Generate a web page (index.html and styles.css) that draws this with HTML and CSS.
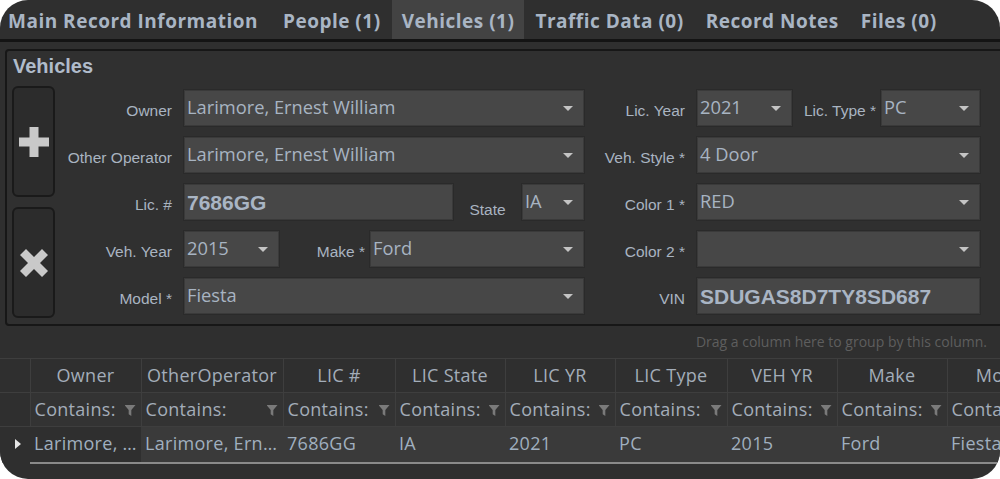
FILE: index.html
```html
<!DOCTYPE html>
<html lang="en">
<head>
    <meta charset="UTF-8">
    <title>Vehicles</title>
    <link rel="stylesheet" href="styles.css">
</head>
<body>
    <div class="window">
        <nav class="tabs">
            <a href="#" class="tab first">Main Record Information</a>
            <a href="#" class="tab">People (1)</a>
            <a href="#" class="tab active">Vehicles (1)</a>
            <a href="#" class="tab">Traffic Data (0)</a>
            <a href="#" class="tab">Record Notes</a>
            <a href="#" class="tab">Files (0)</a>
        </nav>

        <section class="panel">
            <h2 class="panel-title">Vehicles</h2>
            <div class="panel-body">
                <div class="side">
                    <button class="side-btn" title="Add">
                        <svg width="30" height="30" viewBox="0 0 30 30"><path d="M10.5 0h9v10.5H30v9H19.5V30h-9V19.5H0v-9h10.5z" fill="#c9c9c9"/></svg>
                    </button>
                    <button class="side-btn" title="Remove">
                        <svg width="28" height="28" viewBox="0 0 28 28"><path d="M6 0l8 8 8-8 6 6-8 8 8 8-6 6-8-8-8 8-6-6 8-8-8-8z" fill="#c9c9c9"/></svg>
                    </button>
                </div>

                <div class="form">
                    <label class="lbl">Owner</label>
                    <div class="combo">Larimore, Ernest William</div>
                    <label class="lbl">Lic. Year</label>
                    <div class="split">
                        <div class="combo w95">2021</div>
                        <label class="lbl grow">Lic. Type *</label>
                        <div class="combo w99">PC</div>
                    </div>

                    <label class="lbl">Other Operator</label>
                    <div class="combo">Larimore, Ernest William</div>
                    <label class="lbl">Veh. Style *</label>
                    <div class="combo">4 Door</div>

                    <label class="lbl">Lic. #</label>
                    <div class="split">
                        <div class="field bold w269">7686GG</div>
                        <label class="lbl grow center low">State</label>
                        <div class="combo w62">IA</div>
                    </div>
                    <label class="lbl">Color 1 *</label>
                    <div class="combo">RED</div>

                    <label class="lbl">Veh. Year</label>
                    <div class="split">
                        <div class="combo w95">2015</div>
                        <label class="lbl grow">Make *</label>
                        <div class="combo w214">Ford</div>
                    </div>
                    <label class="lbl">Color 2 *</label>
                    <div class="combo"></div>

                    <label class="lbl">Model *</label>
                    <div class="combo">Fiesta</div>
                    <label class="lbl">VIN</label>
                    <div class="field bold">SDUGAS8D7TY8SD687</div>
                </div>
            </div>
        </section>

        <section class="grid">
            <div class="group-bar">Drag a column here to group by this column.</div>
            <table class="data">
                <colgroup>
                    <col style="width:30px">
                    <col style="width:111px">
                    <col style="width:142px">
                    <col style="width:112px">
                    <col style="width:110px">
                    <col style="width:110px">
                    <col style="width:112px">
                    <col style="width:110px">
                    <col style="width:110px">
                    <col style="width:111px">
                </colgroup>
                <thead>
                    <tr class="head">
                        <th class="ind"></th>
                        <th>Owner</th>
                        <th>OtherOperator</th>
                        <th>LIC #</th>
                        <th>LIC State</th>
                        <th>LIC YR</th>
                        <th>LIC Type</th>
                        <th>VEH YR</th>
                        <th>Make</th>
                        <th>Model</th>
                    </tr>
                    <tr class="filter">
                        <td class="ind"></td>
                        <td>Contains:<span class="funnel"></span></td>
                        <td>Contains:<span class="funnel"></span></td>
                        <td>Contains:<span class="funnel"></span></td>
                        <td>Contains:<span class="funnel"></span></td>
                        <td>Contains:<span class="funnel"></span></td>
                        <td>Contains:<span class="funnel"></span></td>
                        <td>Contains:<span class="funnel"></span></td>
                        <td>Contains:<span class="funnel"></span></td>
                        <td>Contains:<span class="funnel"></span></td>
                    </tr>
                </thead>
                <tbody>
                    <tr class="row">
                        <td class="ind"><span class="arrow"></span></td>
                        <td class="focus">Larimore, Ernest William</td>
                        <td>Larimore, Ernest William</td>
                        <td>7686GG</td>
                        <td>IA</td>
                        <td>2021</td>
                        <td>PC</td>
                        <td>2015</td>
                        <td>Ford</td>
                        <td>Fiesta</td>
                    </tr>
                </tbody>
            </table>
        </section>
    </div>
</body>
</html>
```

FILE: styles.css
```css
body {
    margin: 0;
    background: #ffffff;
}
.window {
    width: 1000px;
    height: 479px;
    background: #2f2f2f;
    border-radius: 28px;
    overflow: hidden;
    font-family: "Open Sans", "Noto Sans", sans-serif;
    color: #a9b5c4;
}

/* tabs */
.tabs {
    display: flex;
    height: 39px;
    border-bottom: 3px solid #141414;
}
.tab {
    display: block;
    padding: 3px 11px 0;
    line-height: 36px;
    font-size: 19px;
    font-weight: 700;
    letter-spacing: 0.5px;
    color: #a9b5c4;
    text-decoration: none;
    white-space: nowrap;
}
.tab.first {
    padding-left: 8px;
    padding-right: 14px;
}
.tab.active {
    background: #434343;
    padding: 3px 10px 0;
}

/* vehicles panel */
.panel {
    margin: 7px 0 0 5px;
    width: 1020px;
    border: 2px solid #171717;
    border-radius: 4px;
    background: #303030;
}
.panel-title {
    margin: 0;
    height: 30px;
    padding-left: 6px;
    line-height: 30px;
    font-family: "Liberation Sans", Arial, sans-serif;
    font-size: 20px;
    font-weight: 700;
    color: #b0bccb;
}
.panel-body {
    display: flex;
    margin-top: 5px;
    padding: 0 0 6px 5px;
}
.side {
    display: flex;
    flex-direction: column;
    gap: 10px;
}
.side-btn {
    width: 43px;
    height: 111px;
    padding: 0;
    display: flex;
    align-items: center;
    justify-content: center;
    background: #2c2c2c;
    border: 2px solid #1a1a1a;
    border-radius: 6px;
}

.form {
    display: grid;
    grid-template-columns: 112px 400px 89px 283px;
    grid-auto-rows: 36px;
    column-gap: 12px;
    row-gap: 11px;
    margin-left: 5px;
    padding-top: 4px;
}
.lbl {
    display: flex;
    align-items: center;
    justify-content: flex-end;
    padding-top: 5px;
    font-family: "Liberation Sans", Arial, sans-serif;
    font-size: 15.5px;
    color: #a9b4c1;
    white-space: nowrap;
}
.lbl.grow {
    flex: 1;
    padding-right: 5px;
}
.lbl.center {
    justify-content: center;
    padding-right: 0;
}
.lbl.low {
    padding-top: 16px;
}
.split {
    display: flex;
}
.combo,
.field {
    position: relative;
    box-sizing: border-box;
    height: 36px;
    padding: 3px 30px 0 2px;
    background: #474747;
    border: 1px solid #3a3a3a;
    box-shadow: 0 0 0 1px #2a2a2a;
    font-size: 18.3px;
    line-height: 26px;
    color: #a8b4c2;
    white-space: nowrap;
    overflow: hidden;
}
.combo::after {
    content: "";
    position: absolute;
    right: 10px;
    top: 15px;
    border-left: 5px solid transparent;
    border-right: 5px solid transparent;
    border-top: 5px solid #c4c4c4;
}
.field.bold {
    padding-top: 5px;
    font-family: "Liberation Sans", Arial, sans-serif;
    font-size: 21px;
    font-weight: 700;
    color: #a9b5c4;
}
.w62 { width: 62px; flex: none; }
.w95 { width: 95px; flex: none; }
.w99 { width: 99px; flex: none; }
.w214 { width: 214px; flex: none; }
.w269 { width: 269px; flex: none; }

/* grid */
.group-bar {
    height: 32px;
    padding-right: 13px;
    text-align: right;
    font-size: 14px;
    line-height: 32px;
    color: #5e5e5e;
}
.data {
    table-layout: fixed;
    width: 1058px;
    border-collapse: collapse;
    font-size: 18px;
    letter-spacing: 0.3px;
}
.data th,
.data td {
    padding: 0 4px;
    white-space: nowrap;
    overflow: hidden;
    text-overflow: ellipsis;
    color: #a3adb9;
}
.head th {
    height: 31px;
    padding-bottom: 2px;
    font-weight: 400;
    text-align: center;
    border-top: 1px solid #3e3e3e;
    border-left: 1px solid #3e3e3e;
    background: #2f2f2f;
}
.filter td {
    position: relative;
    height: 31px;
    padding-bottom: 2px;
    background: #333333;
    border-top: 1px solid #3e3e3e;
    border-left: 1px solid #3e3e3e;
    text-overflow: clip;
}
.funnel {
    position: absolute;
    right: 5px;
    top: 12px;
    width: 11px;
    height: 11px;
    background: #7a7a7a;
    clip-path: polygon(0 0, 100% 0, 62% 45%, 62% 100%, 38% 85%, 38% 45%);
}
.row td {
    height: 32px;
    padding-bottom: 3px;
    background: #3a3a3a;
    border-top: 1px solid #3e3e3e;
    border-bottom: 2px solid #8a8a8a;
    color: #a0afbf;
}
.data .ind {
    background: #2f2f2f;
    border-left: none;
}
.row .ind {
    position: relative;
    border-bottom: none;
}
.row .focus {
    background: #2f2f2f;
}
.arrow {
    position: absolute;
    left: 15px;
    top: 12px;
    border-top: 5px solid transparent;
    border-bottom: 5px solid transparent;
    border-left: 6px solid #e6e6e6;
}
```
